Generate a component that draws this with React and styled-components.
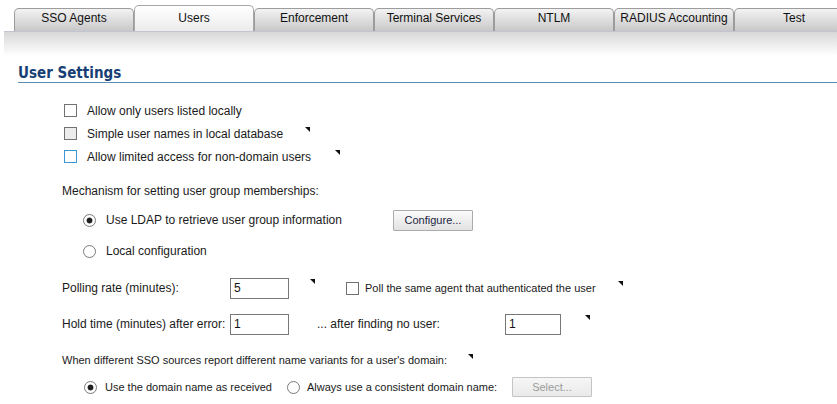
import React from 'react'
import styled, { createGlobalStyle } from 'styled-components'

const GlobalStyle = createGlobalStyle`
  html, body {
    margin: 0;
    background: #fff;
    overflow: hidden;
  }
  body {
    font-family: "Liberation Sans", Arial, sans-serif;
    font-size: 12px;
    color: #1a1a1a;
  }
`

const tabs = ['SSO Agents', 'Users', 'Enforcement', 'Terminal Services', 'NTLM', 'RADIUS Accounting', 'Test']

const TabBar = styled.div`
  display: flex;
  align-items: flex-end;
  height: 32px;
  margin-left: 4px;
  padding-left: 10px;
  border-bottom: 1px solid #c3c3d3;
  box-sizing: border-box;
  overflow: hidden;
`

const Tab = styled.div`
  flex: 0 0 120px;
  box-sizing: border-box;
  height: ${p => (p.$active ? 26 : 23)}px;
  padding-top: ${p => (p.$active ? 5 : 2)}px;
  border: 1px solid ${p => (p.$active ? '#a8a8a8' : '#9c9c9c')};
  border-bottom: none;
  border-radius: 5px 5px 0 0;
  background: ${p => (p.$active
    ? 'linear-gradient(#ffffff, #ececec)'
    : 'linear-gradient(#f3f3f3, #c8c8c8)')};
  text-align: center;
  line-height: 14px;
  color: #111;
  white-space: nowrap;
`

const Band = styled.div`
  margin-left: 4px;
  height: 24px;
  background: linear-gradient(#d8d8d8, #ffffff);
`

const Section = styled.div`
  padding-left: 18px;
`

const Title = styled.h2`
  margin: 9px 0 0;
  font-family: "DejaVu Sans Condensed", "DejaVu Sans", sans-serif;
  font-weight: bold;
  font-size: 15px;
  line-height: 17px;
  color: #173f74;
  border-bottom: 1px solid #5b8db6;
`

const Form = styled.div`
  padding-left: 44px;
  padding-top: 16px;
`

const Row = styled.div`
  display: flex;
  align-items: center;
  height: ${p => p.$h || 23}px;
  margin-top: ${p => p.$mt || 0}px;
  padding-left: ${p => p.$indent || 0}px;
  white-space: nowrap;
`

const Text = styled.span`
  display: inline-block;
  font-size: ${p => (p.$small ? 11 : 12)}px;
  width: ${p => (p.$w ? `${p.$w}px` : 'auto')};
  margin-left: ${p => p.$ml || 0}px;
  flex: none;
`

const Check = styled.input.attrs({ type: 'checkbox' })`
  appearance: none;
  margin: 0;
  flex: none;
  width: 13px;
  height: 13px;
  box-sizing: border-box;
  border: 1px solid ${p => (p.$tone === 'focus' ? '#3a98d6' : '#717171')};
  background: ${p => (p.$tone === 'grey' ? '#ececec' : '#fff')};
  margin-left: ${p => p.$ml || 0}px;
`

const Radio = styled.input.attrs({ type: 'radio' })`
  appearance: none;
  margin: 0;
  flex: none;
  width: 13px;
  height: 13px;
  box-sizing: border-box;
  border-radius: 50%;
  border: 1px solid #7a7a7a;
  background: #fff;
  margin-left: ${p => p.$ml || 0}px;

  &:checked {
    background: radial-gradient(circle, #1f1f1f 0 2.6px, #fff 3.3px);
  }
`

const Field = styled.input`
  flex: none;
  box-sizing: border-box;
  width: ${p => p.$w || 59}px;
  height: 21px;
  margin: 0;
  margin-left: ${p => p.$ml || 0}px;
  padding: 0 3px;
  border: 1px solid #777;
  font-family: "Liberation Sans", Arial, sans-serif;
  font-size: 12px;
  color: #111;
  outline: none;
`

const Button = styled.button`
  flex: none;
  box-sizing: border-box;
  width: 80px;
  height: ${p => p.$h || 21}px;
  margin: 0;
  margin-left: ${p => p.$ml || 0}px;
  padding: 0;
  border: 1px solid ${p => (p.disabled ? '#c4c4c4' : '#acacac')};
  border-radius: 1px;
  background: ${p => (p.disabled
    ? 'linear-gradient(#f6f6f6, #e9e9e9)'
    : 'linear-gradient(#fbfbfb, #e2e2e2)')};
  font-family: "Liberation Sans", Arial, sans-serif;
  font-size: 11px;
  color: ${p => (p.disabled ? '#9b9b9b' : '#1d2442')};
`

const Mark = styled.span`
  flex: none;
  align-self: flex-start;
  margin-top: ${p => p.$mt || 4}px;
  margin-left: ${p => p.$ml || 0}px;
  width: 0;
  height: 0;
  border-top: 5px solid #111;
  border-left: 5px solid transparent;
`

export default function App() {
  return (
    <>
      <GlobalStyle />
      <TabBar>
        {tabs.map(t => (
          <Tab key={t} $active={t === 'Users'}>{t}</Tab>
        ))}
      </TabBar>
      <Band />
      <Section>
        <Title>User Settings</Title>
        <Form>
          <Row $indent={2}>
            <Check />
            <Text $ml={10}>Allow only users listed locally</Text>
          </Row>
          <Row $indent={2}>
            <Check $tone="grey" />
            <Text $ml={10}>Simple user names in local database</Text>
            <Mark $ml={22} $mt={5} />
          </Row>
          <Row $indent={2}>
            <Check $tone="focus" />
            <Text $ml={10}>Allow limited access for non-domain users</Text>
            <Mark $ml={24} $mt={5} />
          </Row>

          <Row $h={22} $mt={12}>
            <Text>Mechanism for setting user group memberships:</Text>
          </Row>
          <Row $h={36} $indent={21}>
            <Radio name="mech" defaultChecked />
            <Text $ml={10} $w={287}>Use LDAP to retrieve user group information</Text>
            <Button>Configure...</Button>
          </Row>
          <Row $h={26} $indent={21}>
            <Radio name="mech" />
            <Text $ml={10}>Local configuration</Text>
          </Row>

          <Row $h={24} $mt={12}>
            <Text $w={168}>Polling rate (minutes):</Text>
            <Field defaultValue="5" />
            <Mark $ml={21} $mt={3} />
            <Check $ml={31} />
            <Text $small $ml={6}>Poll the same agent that authenticated the user</Text>
            <Mark $ml={22} $mt={5} />
          </Row>
          <Row $h={24} $mt={12}>
            <Text $w={168}>Hold time (minutes) after error:</Text>
            <Field defaultValue="1" />
            <Text $ml={28} $w={188}>... after finding no user:</Text>
            <Field defaultValue="1" $w={56} />
            <Mark $ml={24} $mt={3} />
          </Row>

          <Row $h={20} $mt={14}>
            <Text $small>When different SSO sources report different name variants for a user's domain:</Text>
            <Mark $ml={21} $mt={0} />
          </Row>
          <Row $h={24} $mt={5} $indent={22}>
            <Radio name="domain" defaultChecked />
            <Text $small $ml={8} $w={182}>Use the domain name as received</Text>
            <Radio name="domain" />
            <Text $small $ml={7} $w={205}>Always use a consistent domain name:</Text>
            <Button disabled $h={20}>Select...</Button>
          </Row>
        </Form>
      </Section>
    </>
  )
}
